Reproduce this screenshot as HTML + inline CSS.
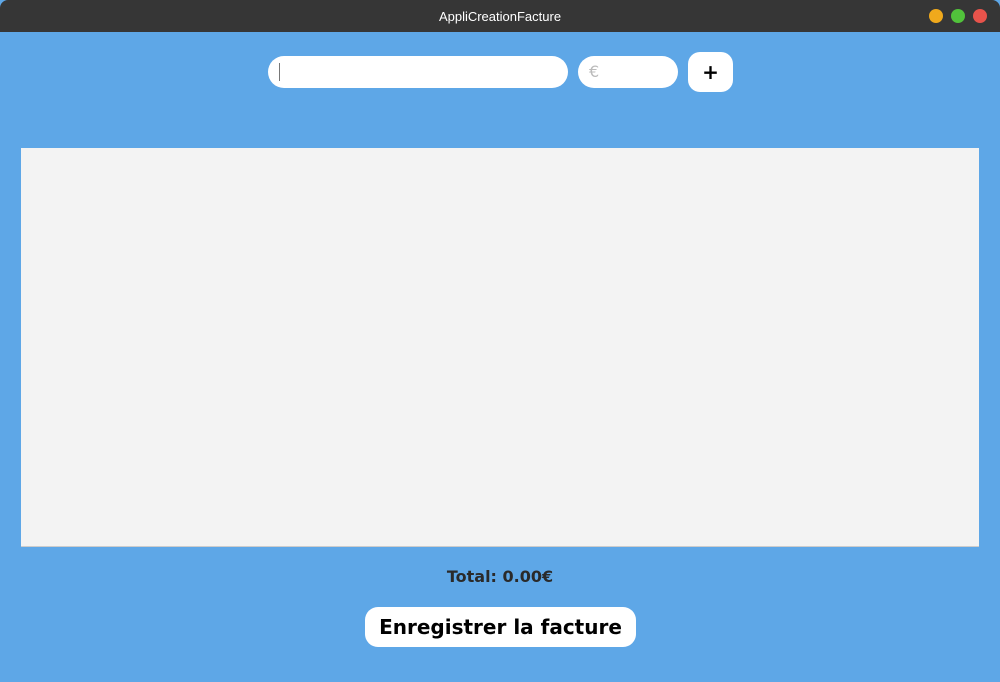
<!DOCTYPE html>
<html><head><meta charset="utf-8"><style>
*{margin:0;padding:0;box-sizing:border-box}
body{width:1000px;height:682px;background:#5ea7e7;position:relative;overflow:hidden;font-family:"DejaVu Sans","Liberation Sans",sans-serif}
.bar{position:absolute;left:0;top:0;width:1000px;height:32px;background:#363636;border-radius:8px 8px 0 0;color:#fff;font-size:13px;text-align:center;line-height:33px;font-family:"Liberation Sans",sans-serif}
.dot{position:absolute;top:9px;width:14px;height:14px;border-radius:50%}
.in{position:absolute;background:#fff;border-radius:16px}
.list{position:absolute;left:21px;top:148px;width:958px;height:399px;background:#f3f3f3;border-bottom:1px solid #ccc}
</style></head><body>
<div class="bar">AppliCreationFacture
<div class="dot" style="left:929px;background:#f0a91c"></div>
<div class="dot" style="left:951px;background:#51c23b"></div>
<div class="dot" style="left:973px;background:#e8534b"></div>
</div>
<div class="in" style="left:268px;top:56px;width:300px;height:32px"><div style="position:absolute;left:11px;top:7px;width:1px;height:18px;background:#777"></div></div>
<div class="in" style="left:578px;top:56px;width:100px;height:32px;color:#bbb;font-size:16px;line-height:32px;padding-left:11px">€</div>
<div class="in" style="left:688px;top:52px;width:45px;height:40px;border-radius:12px;text-align:center;line-height:40px;font-size:20px;font-weight:bold;color:#000">+</div>
<div class="list"></div>
<div style="position:absolute;left:0;width:1000px;top:567px;text-align:center;font-size:16px;font-weight:bold;color:#2a2a2a">Total: 0.00€</div>
<div style="position:absolute;left:365px;top:607px;width:271px;height:40px;background:#fff;border-radius:13px;text-align:center;line-height:40px;font-size:20px;font-weight:bold;color:#000">Enregistrer la facture</div>
</body></html>
